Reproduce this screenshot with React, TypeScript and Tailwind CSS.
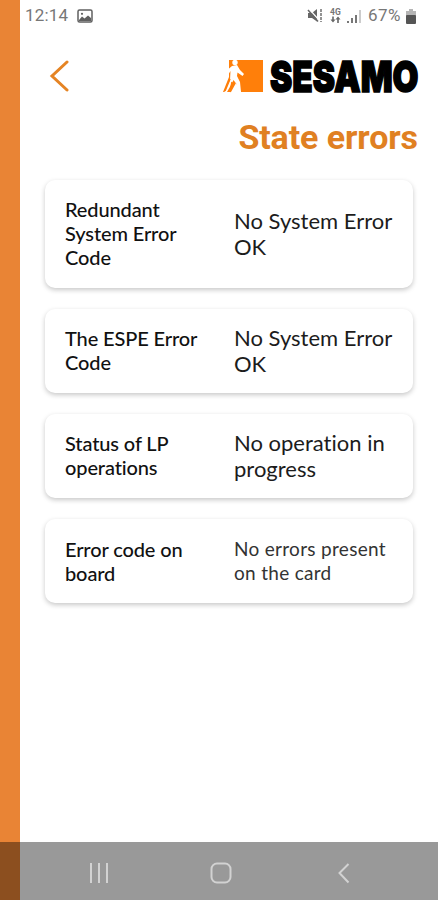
import React from 'react';

interface StatusCardProps {
  label: string;
  value: string;
  compact?: boolean;
}

const cards: StatusCardProps[] = [
  { label: 'Redundant System Error Code', value: 'No System Error OK' },
  { label: 'The ESPE Error Code', value: 'No System Error OK' },
  { label: 'Status of LP operations', value: 'No operation in progress' },
  { label: 'Error code on board', value: 'No errors present on the card', compact: true },
];

const StatusBar: React.FC = () => (
  <div className="flex h-8 items-center pl-[5px] pr-[22px] font-['Roboto',sans-serif] text-[17px] text-[#777777]">
    <span className="tracking-[0.2px]">12:14</span>
    {/* Screenshot notification */}
    <svg className="ml-[9px]" width="16" height="14" viewBox="0 0 16 14">
      <rect x="1" y="1" width="14" height="12" rx="1.5" fill="none" stroke="#606060" strokeWidth="1.5" />
      <path d="M2 11 L5 7.5 L7.5 9.5 L11 6.5 L14 9 V12 H2 Z" fill="#606060" />
      <circle cx="5" cy="4.8" r="1.1" fill="#606060" />
    </svg>
    <div className="ml-auto flex items-center">
      {/* Muted, mobile data and signal strength */}
      <svg width="56" height="18" viewBox="0 0 56 18">
        <path d="M1 6 H5 L10 2 V14.5 L5 11 H1 Z" fill="#666666" />
        <path d="M2 2 L12 13" stroke="#ffffff" strokeWidth="1.2" />
        <path d="M1 3 L11 14.5" stroke="#666666" strokeWidth="1.5" />
        <path d="M14 2 V15" stroke="#888888" strokeWidth="1.8" strokeDasharray="3 1" />
        <text x="23" y="8" fontSize="8.5" fontWeight="700" fill="#777777" fontFamily="Roboto, sans-serif">4G</text>
        <path d="M26 9.5 V13 M31 16 V12" stroke="#666666" strokeWidth="1.6" />
        <path d="M23.5 12.5 H28.5 L26 15.5 Z M28.5 12.5 H33.5 L31 9.5 Z" fill="#666666" />
        <path d="M41 16 V14 M45 16 V11 M49 16 V8" stroke="#777777" strokeWidth="2" />
        <path d="M53 16 V3" stroke="#cccccc" strokeWidth="2" />
      </svg>
      <span className="ml-[5px] tracking-[0.5px]">67%</span>
      <svg className="ml-[5px]" width="10" height="15" viewBox="0 0 10 15">
        <path d="M3 0 H7 V2 H10 V7 H0 V2 H3 Z" fill="#b5b5b5" />
        <rect y="6" width="10" height="9" rx="1" fill="#555555" />
      </svg>
    </div>
  </div>
);

const Logo: React.FC = () => (
  <svg className="-mt-3 -mr-1" width="200" height="62" viewBox="0 -12 200 62">
    <path d="M7 2 H41 V34 H19 L14 25 L9 34 H1 L7 19 Z" fill="#ff7f0a" />
    {/* Walking figure */}
    <circle cx="13" cy="4.5" r="2.7" fill="#ffffff" />
    <path
      d="M10 8 L15 7 L18 12 L22 16 L20.5 18 L15.5 14.5 L15 18 L18 24 L19 34 H15.5 L14.5 26 L11.5 22 L9 27 L5 34 H2.5 L8 22 L8.5 13 L6 17 L4 16 L6.5 11 Z"
      fill="#ffffff"
    />
    <path d="M8 21 L3 33 M10 24 L8 34" stroke="#ff7f0a" strokeWidth="1.5" />
    <text
      x="48"
      y="33.5"
      textLength="148.5"
      lengthAdjust="spacingAndGlyphs"
      fontFamily="Inter, sans-serif"
      fontSize="43"
      fontWeight="900"
      fill="#000000"
      stroke="#000000"
      strokeWidth="1.6"
    >
      SESAMO
    </text>
  </svg>
);

const StatusCard: React.FC<StatusCardProps> = ({ label, value, compact = false }) => (
  <div
    className={`flex items-center rounded-[10px] bg-white px-5 shadow-[0_2px_5px_rgba(0,0,0,0.22)] ${
      compact ? 'py-[18px]' : 'pt-[17px] pb-[19px]'
    }`}
  >
    <p className="w-[169px] shrink-0 pr-6 text-[20px] leading-6 font-medium tracking-[-0.12px]">{label}</p>
    <p
      className={
        compact
          ? '-mr-3 text-[19px] leading-6 tracking-[0.3px] text-[#333333]'
          : '-mt-[3px] -mb-[5px] -mr-3 text-[22px] leading-[26.5px] text-[#1c1c1c]'
      }
    >
      {value}
    </p>
  </div>
);

const NavBar: React.FC = () => (
  <div className="absolute inset-x-0 bottom-0 h-[58px] bg-black/40">
    <svg width="438" height="58" viewBox="0 0 438 58" fill="none" stroke="#d2d2d2" strokeWidth="2">
      <path d="M91 21 V41 M99 21 V41 M107 21 V41" />
      <rect x="211.5" y="21.5" width="19" height="19" rx="5.5" />
      <path d="M348.5 22 L339.5 31 L348.5 40.5" />
    </svg>
  </div>
);

export default function App() {
  return (
    <div className="relative flex h-[900px] w-[438px] overflow-hidden bg-white">
      <div className="w-5 shrink-0 bg-[#e98435]" />
      <main className="flex-1">
        <StatusBar />
        <header className="flex h-[62px] items-start justify-between pt-[26px] pr-[20px] pl-[29px]">
          <svg className="mt-0.5" width="21" height="34" viewBox="0 0 21 34" fill="none" stroke="#e58424" strokeWidth="3">
            <path d="M18 2 L3 16 L18 30" strokeLinecap="round" />
          </svg>
          <Logo />
        </header>
        <h1 className="mt-[22px] pr-[20px] text-right font-['Roboto',sans-serif] text-[34px] leading-[42px] font-bold tracking-[-0.1px] text-[#e08022]">
          State errors
        </h1>
        <section className="mt-[22px] flex flex-col gap-[21px] pr-[25px] pl-[25px] font-['Lato',sans-serif] text-[#111111] [font-variant-ligatures:none]">
          {cards.map((card) => (
            <StatusCard key={card.label} {...card} />
          ))}
        </section>
      </main>
      <NavBar />
    </div>
  );
}
